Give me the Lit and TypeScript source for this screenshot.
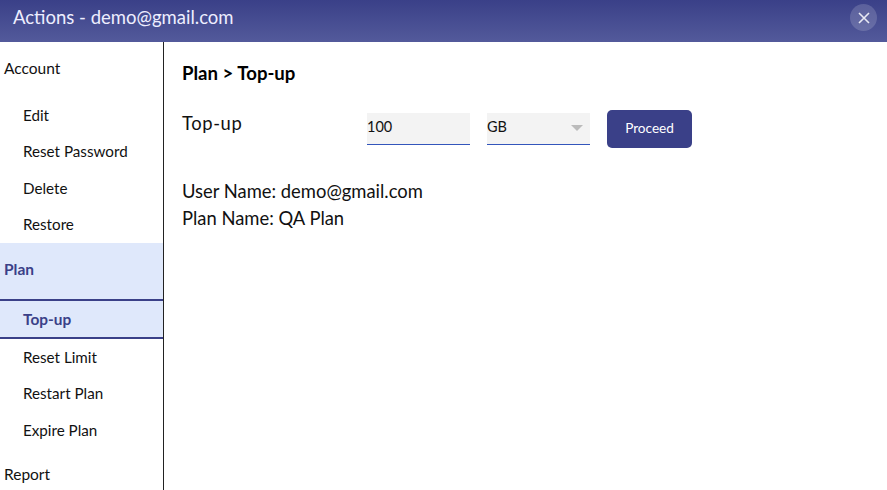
import { LitElement, html, css } from "lit";
import { customElement } from "lit/decorators.js";

@customElement("app-root")
export class AppRoot extends LitElement {
  static styles = css`
    :host { display: block; width: 887px; height: 490px; overflow: hidden; background: #fff; font-family: "Lato", "Open Sans", sans-serif; color: #111; }
    * { box-sizing: border-box; }
    .head { height: 42px; display: flex; align-items: center; justify-content: space-between; padding: 0 10px 7px 13px; background: linear-gradient(180deg, #3a4088, #535a9b); color: #eef; }
    .title { font-size: 18.5px; padding-bottom: 2px; }
    .close { width: 27px; height: 27px; border-radius: 50%; background: rgba(255,255,255,0.16); display: flex; align-items: center; justify-content: center; }
    .main { display: flex; height: 448px; }
    .side { width: 164px; flex: none; border-right: 1px solid #222; overflow: hidden; font-size: 15.2px; }
    .group { height: 55px; display: flex; align-items: center; padding: 0 0 3px 4px; font-size: 15.5px; }
    .group.on { height: 56px; padding-bottom: 4px; background: #dfe8fb; color: #3a4088; font-weight: 700; }
    .group.last { padding-bottom: 5px; }
    .sub { height: 36.5px; display: flex; align-items: center; padding: 0 0 1px 23px; }
    .sub.on { height: 40px; padding-bottom: 0; background: #dfe8fb; color: #3a4088; font-size: 15.4px; font-weight: 700; border-top: 2px solid #3a4088; border-bottom: 2px solid #3a4088; }
    .content { flex: 1; padding: 20px 18px; }
    h2 { margin: 0; font-size: 18.6px; line-height: 22px; font-weight: 700; color: #000; }
    .form { display: flex; align-items: flex-start; margin-top: 26px; }
    .label { width: 185px; font-size: 18.4px; letter-spacing: 0.6px; line-height: 26px; }
    .field { width: 103px; height: 32px; background: #f3f3f3; border-bottom: 1px solid #3355bb; font-size: 14.5px; line-height: 18px; display: flex; align-items: flex-start; justify-content: space-between; padding: 5px 7px 0 0; margin: 3px 17px 0 0; }
    .arrow { width: 0; height: 0; border-left: 6px solid transparent; border-right: 6px solid transparent; border-top: 6px solid #bbb; margin-top: 7px; }
    .btn { width: 85px; height: 38px; padding-bottom: 3px; border-radius: 5px; background: #3a4088; color: #fff; font-size: 13.6px; display: flex; align-items: center; justify-content: center; }
    .info { margin-top: 30px; font-size: 18.4px; line-height: 27px; color: #111; }
  `;

  render() {
    return html`
      <div class="head">
        <span class="title">Actions - demo@gmail.com</span>
        <span class="close"><svg width="12" height="12" viewBox="0 0 12 12"><path d="M1 1L11 11M11 1L1 11" stroke="#e8e9f3" stroke-width="1.6" fill="none"/></svg></span>
      </div>
      <div class="main">
        <nav class="side">
          <div class="group">Account</div>
          <div class="sub">Edit</div>
          <div class="sub">Reset Password</div>
          <div class="sub">Delete</div>
          <div class="sub">Restore</div>
          <div class="group on">Plan</div>
          <div class="sub on">Top-up</div>
          <div class="sub">Reset Limit</div>
          <div class="sub">Restart Plan</div>
          <div class="sub">Expire Plan</div>
          <div class="group last">Report</div>
        </nav>
        <section class="content">
          <h2>Plan &gt; Top-up</h2>
          <div class="form">
            <div class="label">Top-up</div>
            <div class="field"><span>100</span></div>
            <div class="field"><span>GB</span><span class="arrow"></span></div>
            <div class="btn">Proceed</div>
          </div>
          <div class="info">User Name: demo@gmail.com<br />Plan Name: QA Plan</div>
        </section>
      </div>
    `;
  }
}
